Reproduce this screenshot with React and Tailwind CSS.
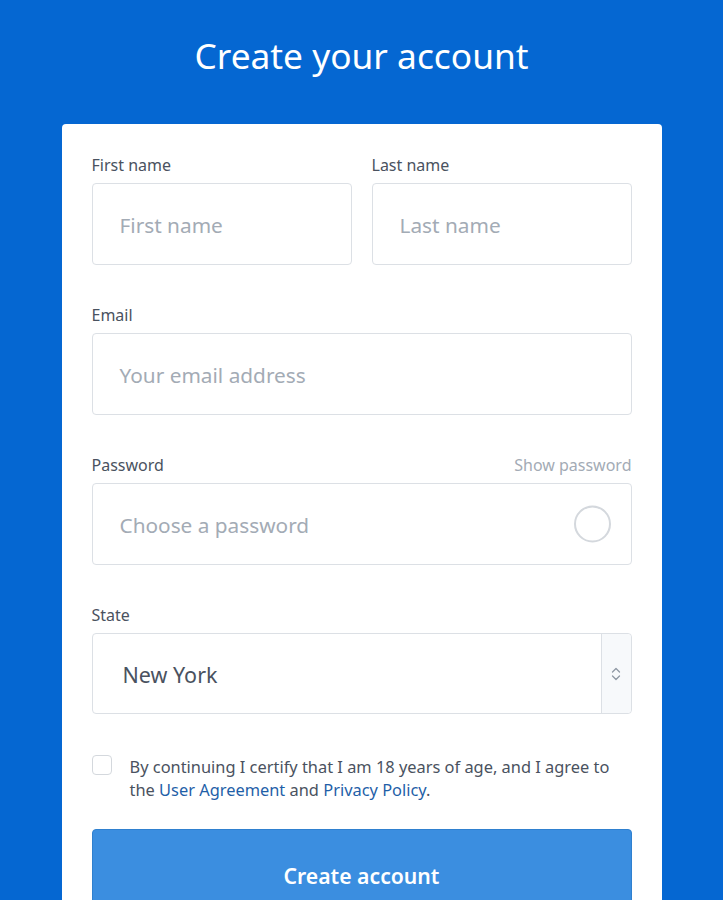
import React from "react";

const font = { fontFamily: '"Noto Sans", "Open Sans", sans-serif' };

function Label({ children, right }) {
  return (
    <div className="flex items-center justify-between h-6 mb-[6px] text-[16px] text-[#4a5260]">
      <span>{children}</span>
      {right}
    </div>
  );
}

function Input({ placeholder, children }) {
  return (
    <div className="relative h-[82px] rounded-[4px] border border-[#dce0e5] bg-white flex items-center pl-[27px] pt-[3px] text-[20.8px] text-[#a3abb5]">
      {placeholder}
      {children}
    </div>
  );
}

export default function App() {
  return (
    <div style={font} className="min-h-[900px] bg-[#0567d2] pt-[30px]">
      <h1 className="text-center text-white text-[35.3px] leading-[50px] h-[94px]">Create your account</h1>
      <div className="mx-auto w-[600px] bg-white rounded-[4px] px-[30px] pt-[29px] pb-10">
        <div className="grid grid-cols-2 gap-5">
          <div>
            <Label>First name</Label>
            <Input placeholder="First name" />
          </div>
          <div>
            <Label>Last name</Label>
            <Input placeholder="Last name" />
          </div>
        </div>
        <div className="mt-[38px]">
          <Label>Email</Label>
          <Input placeholder="Your email address" />
        </div>
        <div className="mt-[38px]">
          <Label right={<span className="text-[#a3abb5]">Show password</span>}>Password</Label>
          <Input placeholder="Choose a password">
            <div className="absolute right-[20px] top-1/2 -translate-y-1/2 w-[37px] h-[37px] rounded-full border-2 border-[#d4d8dd]" />
          </Input>
        </div>
        <div className="mt-[38px]">
          <Label>State</Label>
          <div className="h-[81px] rounded-[4px] border border-[#dce0e5] bg-white flex">
            <div className="flex-1 flex items-center pl-[30px] pt-[3px] text-[21.5px] text-[#4a5260]">New York</div>
            <div className="w-[30px] border-l border-[#dce0e5] bg-[#f7f9fb] flex items-center justify-center rounded-r-[4px]">
              <svg width="12" height="20" viewBox="0 0 12 20" fill="none" stroke="#8f98a3" strokeWidth="1.3" strokeLinecap="round" strokeLinejoin="round">
                <path d="M2.5 8 L6 4.5 L9.5 8" />
                <path d="M2.5 12 L6 15.5 L9.5 12" />
              </svg>
            </div>
          </div>
        </div>
        <div className="mt-[40px] flex items-start">
          <div className="mt-[1px] w-5 h-5 shrink-0 rounded-[4px] border border-[#d4d8dd] bg-white" />
          <p className="ml-[18px] mt-[1px] max-w-[490px] text-[16.4px] leading-[23px] text-[#4a5260]">
            By continuing I certify that I am 18 years of age, and I agree to the{" "}
            <a className="text-[#1f5fa8]">User Agreement</a> and{" "}
            <a className="text-[#1f5fa8]">Privacy Policy</a>.
          </p>
        </div>
        <button className="mt-[28px] w-full h-[94px] rounded-[4px] bg-[#3b8ee0] text-white text-[21.2px] font-semibold border border-[#2f80cf]">
          Create account
        </button>
      </div>
    </div>
  );
}
